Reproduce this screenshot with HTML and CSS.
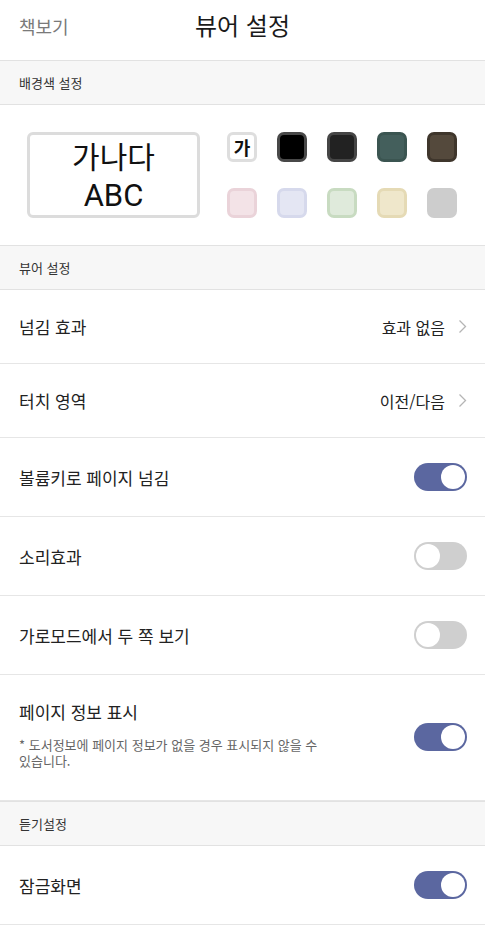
FILE: index.html
```html
<!DOCTYPE html>
<html lang="ko">
<head>
<meta charset="utf-8">
<title>뷰어 설정</title>
<link rel="stylesheet" href="styles.css">
</head>
<body>
<div class="page">
  <header class="topbar">
    <span class="back">책보기</span>
    <h1 class="title">뷰어 설정</h1>
  </header>

  <div class="section-head">배경색 설정</div>
  <div class="colors">
    <div class="preview">
      <div class="pv-ko">가나다</div>
      <div class="pv-en">ABC</div>
    </div>
    <div class="swatches">
      <span class="sw sw-text">가</span>
      <span class="sw sw-black"></span>
      <span class="sw sw-dark"></span>
      <span class="sw sw-teal"></span>
      <span class="sw sw-brown"></span>
      <span class="sw sw-pink"></span>
      <span class="sw sw-lav"></span>
      <span class="sw sw-green"></span>
      <span class="sw sw-cream"></span>
      <span class="sw sw-grey"></span>
    </div>
  </div>

  <div class="section-head">뷰어 설정</div>
  <div class="row row-link">
    <span class="label">넘김 효과</span>
    <span class="value">효과 없음<svg class="chev" width="9" height="15" viewBox="0 0 9 15"><path d="M1.5 1.5 L7.5 7.5 L1.5 13.5" fill="none" stroke="#b5b5b5" stroke-width="1.3"/></svg></span>
  </div>
  <div class="row row-link">
    <span class="label">터치 영역</span>
    <span class="value">이전/다음<svg class="chev" width="9" height="15" viewBox="0 0 9 15"><path d="M1.5 1.5 L7.5 7.5 L1.5 13.5" fill="none" stroke="#b5b5b5" stroke-width="1.3"/></svg></span>
  </div>
  <div class="row row-toggle">
    <span class="label">볼륨키로 페이지 넘김</span>
    <span class="toggle on"><span class="knob"></span></span>
  </div>
  <div class="row row-toggle">
    <span class="label">소리효과</span>
    <span class="toggle"><span class="knob"></span></span>
  </div>
  <div class="row row-toggle">
    <span class="label">가로모드에서 두 쪽 보기</span>
    <span class="toggle"><span class="knob"></span></span>
  </div>
  <div class="row row-tall">
    <div class="text-block">
      <span class="label">페이지 정보 표시</span>
      <p class="note">* 도서정보에 페이지 정보가 없을 경우 표시되지 않을 수 있습니다.</p>
    </div>
    <span class="toggle on"><span class="knob"></span></span>
  </div>

  <div class="section-head section-head-thick">듣기설정</div>
  <div class="row row-toggle">
    <span class="label">잠금화면</span>
    <span class="toggle on"><span class="knob"></span></span>
  </div>
</div>
</body>
</html>
```

FILE: styles.css
```css
* { box-sizing: border-box; }
html, body { margin: 0; padding: 0; background: #fff; }
body {
  font-family: "Noto Sans CJK KR", "Noto Sans", sans-serif;
  color: #222;
}
.page { width: 485px; }

.topbar {
  height: 61px;
  display: flex;
  align-items: center;
  justify-content: center;
  position: relative;
  border-bottom: 1px solid #e2e2e2;
}
.back {
  position: absolute;
  left: 19px;
  top: 13px;
  font-size: 18px;
  color: #7a7a7a;
}
.title {
  margin: 0 0 10px 0;
  font-size: 24px;
  line-height: 34px;
  font-weight: 400;
  color: #1a1a1a;
}

.section-head {
  height: 44px;
  display: flex;
  align-items: center;
  padding-left: 19px;
  background: #f7f7f7;
  border-bottom: 1px solid #e2e2e2;
  font-size: 13px;
  color: #333;
}
.section-head-thick { border-top: 1px solid #e2e2e2; height: 45px; }

.colors {
  height: 141px;
  display: flex;
  align-items: flex-start;
  border-bottom: 1px solid #e2e2e2;
}
.preview {
  margin: 27px 0 0 27px;
  width: 173px;
  height: 86px;
  border: 3px solid #dcdcdc;
  border-radius: 6px;
  display: flex;
  flex-direction: column;
  align-items: center;
  justify-content: center;
  color: #111;
}
.pv-ko { font-size: 30px; line-height: 44px; margin-top: -2px; }
.pv-en {
  font-family: Roboto, "Noto Sans", sans-serif;
  font-size: 31px;
  line-height: 38px;
}
.swatches {
  margin: 27px 0 0 27px;
  display: grid;
  grid-template-columns: repeat(5, 30px);
  grid-auto-rows: 30px;
  column-gap: 20px;
  row-gap: 26px;
}
.sw {
  width: 30px;
  height: 30px;
  border-radius: 7px;
  border: 3px solid transparent;
  display: flex;
  align-items: center;
  justify-content: center;
}
.sw-text { background: #fff; border-color: #dedede; font-size: 18px; font-weight: 700; color: #111; border-radius: 6px; }
.sw-black { background: #000; border-color: #484848; }
.sw-dark { background: #222; border-color: #454545; }
.sw-teal { background: #445f5c; border-color: #3b5551; }
.sw-brown { background: #54493c; border-color: #3f362c; }
.sw-pink { background: #f3e3e7; border-color: #ead3d9; }
.sw-lav { background: #e4e6f3; border-color: #d6d9ec; }
.sw-green { background: #dfeadb; border-color: #c8dbc1; }
.sw-cream { background: #efe7cb; border-color: #e5dab5; }
.sw-grey { background: #cdcdcd; border-color: #cdcdcd; }

.row {
  display: flex;
  align-items: center;
  justify-content: space-between;
  padding: 0 18px 0 19px;
  border-bottom: 1px solid #e6e6e6;
}
.row-link { height: 74px; }
.row-toggle { height: 79px; }
.row-tall { height: 126px; align-items: flex-start; }
.label { font-size: 17px; color: #222; }
.value {
  display: flex;
  align-items: center;
  font-size: 16px;
  color: #222;
}
.chev { margin-left: 13px; }

.text-block { padding-top: 25px; }
.text-block .label { display: block; line-height: 24px; }
.note {
  margin: 13px 0 0 0;
  width: 310px;
  font-size: 13px;
  line-height: 16px;
  color: #666;
}
.row-tall .toggle { margin-top: 48px; }

.toggle {
  width: 53px;
  height: 28px;
  border-radius: 14px;
  background: #cfcfcf;
  display: flex;
  align-items: center;
  padding: 2px;
}
.toggle .knob {
  width: 24px;
  height: 24px;
  border-radius: 50%;
  background: #fff;
}
.toggle.on { background: #5b67a0; justify-content: flex-end; }
```
